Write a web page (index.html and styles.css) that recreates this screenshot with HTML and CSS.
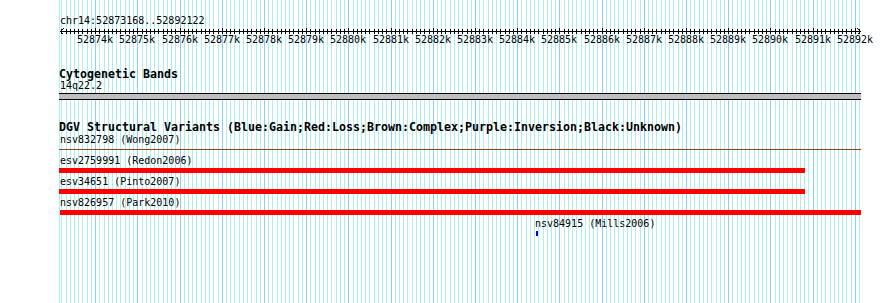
FILE: index.html
```html
<!DOCTYPE html>
<html lang="en">
<head>
    <meta charset="UTF-8">
    <meta name="viewport" content="width=device-width, initial-scale=1.0">
    <title>chr14:52873168..52892122</title>
    <link rel="stylesheet" href="styles.css">
</head>
<body>
    <div class="panel">
        <!-- grade de fundo (desenhada pelo script) -->
        <svg class="grid" id="grid" width="890" height="303"></svg>

        <!-- Régua -->
        <div class="ruler">
            <div class="ruler-title">chr14:52873168..52892122</div>
            <svg class="ruler-axis" id="axis" width="890" height="7"></svg>
            <div class="ruler-labels" id="rulerLabels"></div>
        </div>

        <!-- Bandas citogenéticas -->
        <div class="track bands">
            <div class="track-title">Cytogenetic Bands</div>
            <div class="feature-label">14q22.2</div>
            <div class="band"></div>
        </div>

        <!-- Variantes estruturais -->
        <div class="track dgv">
            <div class="track-title dgv-title">DGV Structural Variants (Blue:Gain;Red:Loss;Brown:Complex;Purple:Inversion;Black:Unknown)</div>
            <div class="feature-label">nsv832798 (Wong2007)</div>
            <div class="sv-line complex"></div>

            <div class="feature">
                <div class="feature-label">esv2759991 (Redon2006)</div>
                <div class="sv-bar loss" style="margin-left: 59px; width: 746px;"></div>
            </div>
            <div class="feature">
                <div class="feature-label">esv34651 (Pinto2007)</div>
                <div class="sv-bar loss" style="margin-left: 59px; width: 746px;"></div>
            </div>
            <div class="feature">
                <div class="feature-label">nsv826957 (Park2010)</div>
                <div class="sv-bar loss" style="margin-left: 60px; width: 801px;"></div>
            </div>
            <div class="feature">
                <div class="feature-label" style="margin-left: 535px;">nsv84915 (Mills2006)</div>
                <div class="sv-bar gain" style="margin-left: 536px; width: 2px;"></div>
            </div>
        </div>
    </div>

    <script src="script.js"></script>
</body>
</html>
```

FILE: styles.css
```css
body {
    margin: 0;
    background-color: white;
    font-family: "DejaVu Sans Mono", "Liberation Mono", monospace;
    font-size: 10px;
    color: black;
}
.panel {
    position: relative;
    width: 890px;
    height: 303px;
    overflow: hidden;
}
.grid {
    position: absolute;
    top: 0;
    left: 0;
    z-index: 0;
}
.ruler,
.track {
    position: relative;
    z-index: 1;
}
.ruler-title {
    margin-top: 15px;
    margin-left: 60px;
    line-height: 12px;
    height: 12px;
    white-space: nowrap;
}
.ruler-axis {
    display: block;
}
.ruler-labels {
    position: relative;
    height: 12px;
    line-height: 12px;
}
.ruler-labels span {
    position: absolute;
    top: 0;
    white-space: nowrap;
}
.track-title {
    margin-left: 59px;
    font-weight: bold;
    font-size: 11.63px;
    line-height: 12px;
    height: 12px;
    white-space: nowrap;
}
.feature-label {
    margin-left: 60px;
    line-height: 12px;
    height: 12px;
    white-space: nowrap;
}
.bands {
    margin-top: 22px;
}
.band {
    margin-top: 1px;
    margin-left: 59px;
    width: 802px;
    height: 7px;
    box-sizing: border-box;
    border-top: 1px solid black;
    border-bottom: 1px solid black;
    background-color: #bebebe;
}
.dgv {
    margin-top: 21px;
}
.dgv-title {
    line-height: 13px;
    height: 13px;
}
.sv-line {
    margin-top: 3px;
    margin-left: 59px;
    width: 802px;
    height: 1px;
}
.sv-line.complex {
    background-color: #8b4513;
}
.feature {
    margin-top: 3px;
}
.dgv .sv-line + .feature {
    margin-top: 5px;
}
.sv-bar {
    margin-top: 1px;
    height: 5px;
}
.sv-bar.loss {
    background-color: #ff0000;
}
.sv-bar.gain {
    background-color: #0000ff;
}
```

FILE: script.js
```js
// Coordenadas da região mostrada
const START = 52873168;
const END = 52892122;
const LEFT = 60;
const WIDTH = 800;
const scale = WIDTH / (END - START);
const NS = 'http://www.w3.org/2000/svg';

function px(pos) {
    return Math.round(LEFT + (pos - START) * scale);
}

function line(svg, x1, y1, x2, y2, color) {
    const el = document.createElementNS(NS, 'line');
    el.setAttribute('x1', x1);
    el.setAttribute('y1', y1);
    el.setAttribute('x2', x2);
    el.setAttribute('y2', y2);
    el.setAttribute('stroke', color);
    el.setAttribute('stroke-width', 1);
    el.setAttribute('shape-rendering', 'crispEdges');
    svg.appendChild(el);
}

const grid = document.getElementById('grid');
const axis = document.getElementById('axis');
const labels = document.getElementById('rulerLabels');

// Grade: linhas a cada 100 pb, mais fortes a cada 1 kb
line(grid, 59.5, 0, 59.5, 303, '#afeeee');
for (let p = Math.ceil(START / 100) * 100; p <= END; p += 100) {
    const x = px(p) + 0.5;
    const major = p % 1000 === 0;
    line(grid, x, 0, x, 303, major ? '#87cefa' : '#afeeee');
}

// Régua com setas nas duas pontas
line(axis, 60, 4.5, 861, 4.5, 'black');
line(axis, 60.5, 4.5, 63.5, 1.5, 'black');
line(axis, 60.5, 4.5, 63.5, 7.5, 'black');
line(axis, 860.5, 4.5, 857.5, 1.5, 'black');
line(axis, 860.5, 4.5, 857.5, 7.5, 'black');

for (let p = Math.ceil(START / 100) * 100; p <= END; p += 100) {
    const x = px(p) + 0.5;
    const major = p % 1000 === 0;
    if (major) {
        line(axis, x, 1, x, 7, 'black');
        const label = document.createElement('span');
        label.textContent = (p / 1000) + 'k';
        label.style.left = (px(p) - 18) + 'px';
        labels.appendChild(label);
    } else {
        line(axis, x, 2, x, 7, 'black');
    }
}
```
